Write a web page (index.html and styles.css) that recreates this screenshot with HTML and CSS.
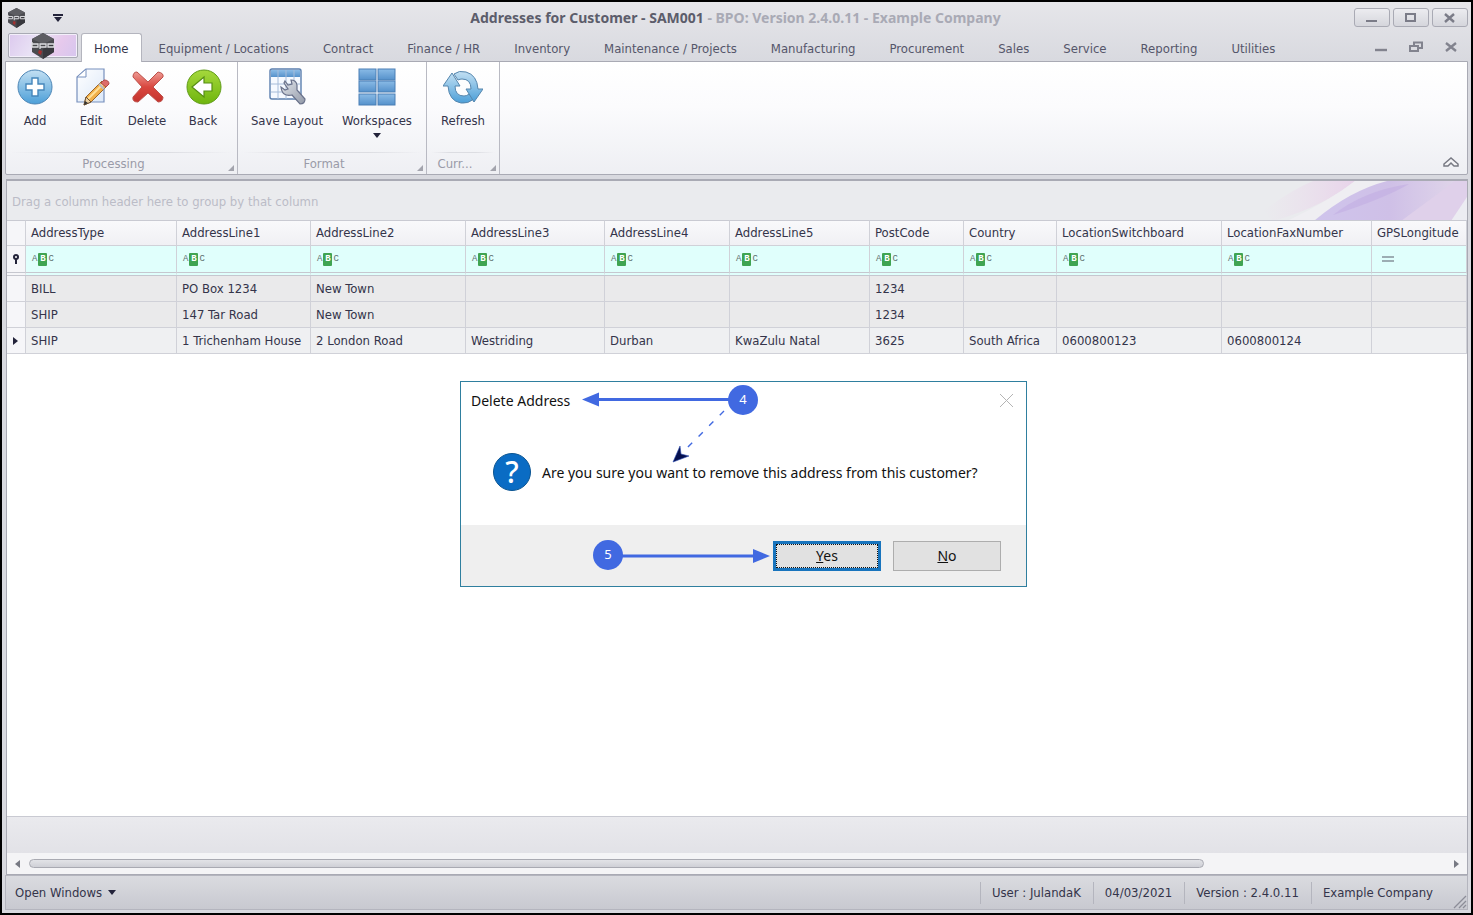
FILE: index.html
```
<!DOCTYPE html>
<html lang="en">

<head>
    <meta charset="utf-8">
    <title>Addresses for Customer - SAM001</title>
    <link rel="stylesheet" href="styles.css">
</head>

<body>
    <svg class="defs" width="0" height="0">
        <defs>
            <linearGradient id="blue" x1="0" y1="0" x2="0" y2="1">
                <stop offset="0" stop-color="#c3e0f3" />
                <stop offset="1" stop-color="#4c9fd8" />
            </linearGradient>
            <linearGradient id="tile" x1="0" y1="0" x2="0" y2="1">
                <stop offset="0" stop-color="#8abbe6" />
                <stop offset="1" stop-color="#5591cb" />
            </linearGradient>
            <linearGradient id="green" x1="0" y1="0" x2="0" y2="1">
                <stop offset="0" stop-color="#a5d83c" />
                <stop offset="1" stop-color="#6fb50e" />
            </linearGradient>
            <linearGradient id="red" x1="0" y1="0" x2="0" y2="1">
                <stop offset="0" stop-color="#ee9a93" />
                <stop offset="0.5" stop-color="#d9473f" />
                <stop offset="1" stop-color="#c4332e" />
            </linearGradient>
            <linearGradient id="paper" x1="0" y1="0" x2="1" y2="1">
                <stop offset="0" stop-color="#ffffff" />
                <stop offset="1" stop-color="#dce8f8" />
            </linearGradient>
            <linearGradient id="steel" x1="0" y1="0" x2="1" y2="1">
                <stop offset="0" stop-color="#e2e6ec" />
                <stop offset="1" stop-color="#9299a8" />
            </linearGradient>
            <symbol id="cube" viewBox="0 0 24 26">
                <path d="M12 0 L23 6 V19 L12 26 L1 19 V6 Z" fill="#4a4a4f" />
                <path d="M12 0 L23 6 L12 11 L1 6 Z" fill="#5d5d62" />
                <path d="M12 16 L23 10 V19 L12 26 Z" fill="#38383d" />
                <path d="M1 9 V14 H7 V11 H1 M9 16 V11 H15 V14 H9 M17 11 H23 V14 H17 Z" fill="none" stroke="#dedee2" stroke-width="1.3" />
                <path d="M8 17 L11 18 L10 22 L7 20 Z" fill="#a32f2f" />
            </symbol>
        </defs>
    </svg>

    <div class="window">
        <header class="titlebar">
            <div class="quick">
                <svg width="19" height="20"><use href="#cube" /></svg>
                <svg width="10" height="8"><path d="M0 1 H10" stroke="#23233a" stroke-width="2" /><path d="M1 3 H9 L5 8 Z" fill="#23233a" /></svg>
            </div>
            <h1 class="title">Addresses for Customer - SAM001 <span>- BPO: Version 2.4.0.11 - Example Company</span></h1>
            <div class="winbuttons">
                <button type="button" aria-label="Minimize"><svg width="12" height="10"><path d="M0 8 H11" stroke="#7b7c88" stroke-width="2" /></svg></button>
                <button type="button" aria-label="Maximize"><svg width="12" height="10"><rect x="1" y="1" width="9" height="7" fill="none" stroke="#7b7c88" stroke-width="2" /></svg></button>
                <button type="button" aria-label="Close"><svg width="12" height="10"><path d="M1 1 L10 9 M10 1 L1 9" stroke="#7b7c88" stroke-width="2.4" /></svg></button>
            </div>
        </header>

        <nav class="tabs">
            <button type="button" class="appbutton" aria-label="Menu"><svg width="24" height="26"><use href="#cube" /></svg></button>
            <a href="#" class="tab active">Home</a>
            <a href="#" class="tab">Equipment / Locations</a>
            <a href="#" class="tab">Contract</a>
            <a href="#" class="tab">Finance / HR</a>
            <a href="#" class="tab">Inventory</a>
            <a href="#" class="tab">Maintenance / Projects</a>
            <a href="#" class="tab">Manufacturing</a>
            <a href="#" class="tab">Procurement</a>
            <a href="#" class="tab">Sales</a>
            <a href="#" class="tab">Service</a>
            <a href="#" class="tab">Reporting</a>
            <a href="#" class="tab">Utilities</a>
            <div class="mdibuttons">
                <button type="button" aria-label="Minimize page"><svg width="14" height="12"><path d="M1 9 H13" stroke="#82838e" stroke-width="2.4" /></svg></button>
                <button type="button" aria-label="Restore page"><svg width="14" height="12"><path d="M5 4 V1.5 H13 V7 H10" fill="none" stroke="#82838e" stroke-width="2" /><rect x="1" y="5" width="8" height="5" fill="none" stroke="#82838e" stroke-width="2" /></svg></button>
                <button type="button" aria-label="Close page"><svg width="14" height="12"><path d="M2 2 L12 10 M12 2 L2 10" stroke="#82838e" stroke-width="2.4" /></svg></button>
            </div>
        </nav>

        <div class="ribbon">
            <section class="group">
                <div class="items">
                    <button type="button" class="item">
                        <svg width="38" height="38"><circle cx="19" cy="19" r="17" fill="url(#blue)" stroke="#4d85b5" /><path d="M16 10 H22 V16 H28 V22 H22 V28 H16 V22 H10 V16 H16 Z" fill="#fff" stroke="#4586bb" stroke-width="1.4" /></svg>
                        Add
                    </button>
                    <button type="button" class="item">
                        <svg width="38" height="38"><path d="M14 1 H32 V34 H5 V9 Z" fill="url(#paper)" stroke="#7790bd" stroke-width="1.2" /><path d="M14 1 V9 H5 Z" fill="#fff" stroke="#7790bd" /><path d="M12 37 L14 29 L30 13 L35 18 L19 34 Z" fill="#f2b04a" stroke="#98652c" /><path d="M16 31 L31 16" stroke="#ffe09a" stroke-width="2" /><path d="M12 37 L14 29 L19 34 Z" fill="#eed3a4" stroke="#6b5136" /><path d="M12 37 L13 33 L16 35 Z" fill="#333" /><path d="M29 15 L32 12 Q37 12 37 16 L34 19 Z" fill="#dd6c69" stroke="#b04a48" /><path d="M27 16 L32 21" stroke="#b9bcc8" stroke-width="2" /></svg>
                        Edit
                    </button>
                    <button type="button" class="item">
                        <svg width="38" height="38"><path d="M9 4 L20 14 L30 4 Q36 5 35 9 L25 19 L35 29 Q35 34 30 34 L20 25 L10 34 Q4 34 5 29 L14 19 L5 9 Q5 4 9 4 Z" fill="url(#red)" stroke="#bd504a" /></svg>
                        Delete
                    </button>
                    <button type="button" class="item">
                        <svg width="38" height="38"><circle cx="20" cy="19" r="17" fill="url(#green)" stroke="#609c18" /><path d="M8 19 L20 9 V15 H28 V23 H20 V29 Z" fill="#fff" stroke="#568e14" stroke-width="1.2" /></svg>
                        Back
                    </button>
                </div>
                <div class="caption">Processing</div>
            </section>
            <section class="group">
                <div class="items wide">
                    <button type="button" class="item">
                        <svg width="38" height="38"><rect x="2" y="1" width="31" height="30" rx="2" fill="#f5f9ff" stroke="#5b7fae" stroke-width="1.4" /><rect x="3" y="2" width="29" height="7" fill="url(#tile)" /><path d="M10 2 V31 M18 2 V31 M26 2 V31 M3 16 H32 M3 24 H32" stroke="#a6bcd9" /><path d="M17 13 L20 17 L24 16 L23 12 Q28 12 29 17 V22 L37 31 Q37 36 32 36 L24 27 Q14 29 13 19 L17 22 L20 21 L16 15 Z" fill="url(#steel)" stroke="#69718a" stroke-width="1.2" /></svg>
                        Save Layout
                    </button>
                    <button type="button" class="item">
                        <svg width="38" height="38"><g fill="url(#tile)" stroke="#4a7eb5"><rect x="1" y="1" width="17" height="11" /><rect x="20" y="1" width="17" height="11" /><rect x="1" y="13" width="17" height="11" /><rect x="20" y="13" width="17" height="11" /><rect x="1" y="26" width="17" height="11" /><rect x="20" y="26" width="17" height="11" /></g></svg>
                        Workspaces
                        <svg class="drop" width="8" height="5"><path d="M0 0 H8 L4 5 Z" fill="#23233a" /></svg>
                    </button>
                </div>
                <div class="caption">Format</div>
            </section>
            <section class="group">
                <div class="items wide">
                    <button type="button" class="item small">
                        <svg width="40" height="38"><path d="M9 5 L17 18 H12 Q12 28 21 28 Q24 28 26 26 L31 31 Q25 36 18 35 Q6 33 5 18 H0 Z" fill="url(#blue)" stroke="#5686ad" /><path d="M31 34 L23 21 H28 Q28 11 19 11 Q17 11 15 12 L11 6 Q16 2 23 4 Q34 7 35 21 H40 Z" fill="url(#blue)" stroke="#5686ad" /></svg>
                        Refresh
                    </button>
                </div>
                <div class="caption">Curr...</div>
            </section>
            <button type="button" class="collapse" aria-label="Collapse ribbon"><svg width="16" height="12"><path d="M1 8 L8 2 L15 8 V10 H11 L8 7 L5 10 H1 Z" fill="#f4f4f6" stroke="#777983" stroke-width="1.5" /></svg></button>
        </div>

        <main class="grid">
            <div class="grouppanel">
                Drag a column header here to group by that column
                <svg class="swirl" width="204" height="40" viewBox="0 0 204 40">
                    <defs>
                        <linearGradient id="pink" x1="0" y1="0" x2="1" y2="0">
                            <stop offset="0" stop-color="#ecdcec" stop-opacity="0" />
                            <stop offset="1" stop-color="#e8d3ea" />
                        </linearGradient>
                        <linearGradient id="lilac" x1="0" y1="0" x2="1" y2="0">
                            <stop offset="0" stop-color="#cfc4ec" />
                            <stop offset="0.5" stop-color="#cfc0e7" />
                            <stop offset="1" stop-color="#e2d8ea" />
                        </linearGradient>
                    </defs>
                    <path d="M0 30 Q30 8 50 0 H92 Q60 26 10 40 Z" fill="url(#pink)" />
                    <path d="M50 40 Q90 10 134 0 H92 Q66 20 24 40 Z" fill="#efeef2" />
                    <path d="M51 40 Q86 10 124 0 H204 V18 L190 40 Z" fill="url(#lilac)" />
                    <path d="M70 34 Q100 10 146 3 Q120 18 70 34" fill="#bfa9e2" opacity="0.5" />
                    <path d="M138 40 L192 0 H204 V18 L188 40 Z" fill="#dfd0ea" />
                    <path d="M188 40 L204 16 V40 Z" fill="#ececf2" />
                </svg>
            </div>
            <table class="addresses">
                <colgroup>
                    <col class="c-mark"><col class="c-type"><col class="c-line1"><col class="c-line2"><col class="c-line3"><col class="c-line4"><col class="c-line5"><col class="c-post"><col class="c-country"><col class="c-switch"><col class="c-fax"><col>
                </colgroup>
                <thead>
                    <tr>
                        <td></td>
                        <th>AddressType</th>
                        <th>AddressLine1</th>
                        <th>AddressLine2</th>
                        <th>AddressLine3</th>
                        <th>AddressLine4</th>
                        <th>AddressLine5</th>
                        <th>PostCode</th>
                        <th>Country</th>
                        <th>LocationSwitchboard</th>
                        <th>LocationFaxNumber</th>
                        <th>GPSLongitude</th>
                    </tr>
                    <tr class="filter">
                        <td><svg width="8" height="10"><circle cx="4" cy="3" r="3" fill="#23233a" /><circle cx="4" cy="3" r="1" fill="#fff" /><path d="M4 5 V10" stroke="#23233a" stroke-width="2" /></svg></td>
                        <td><span class="abc">A<b>B</b>C</span></td>
                        <td><span class="abc">A<b>B</b>C</span></td>
                        <td><span class="abc">A<b>B</b>C</span></td>
                        <td><span class="abc">A<b>B</b>C</span></td>
                        <td><span class="abc">A<b>B</b>C</span></td>
                        <td><span class="abc">A<b>B</b>C</span></td>
                        <td><span class="abc">A<b>B</b>C</span></td>
                        <td><span class="abc">A<b>B</b>C</span></td>
                        <td><span class="abc">A<b>B</b>C</span></td>
                        <td><span class="abc">A<b>B</b>C</span></td>
                        <td><svg class="equals" width="12" height="6"><path d="M0 1 H12 M0 5 H12" stroke="#85929a" stroke-width="1.5" /></svg></td>
                    </tr>
                </thead>
                <tbody>
                    <tr>
                        <td></td><td>BILL</td><td>PO Box 1234</td><td>New Town</td><td></td><td></td><td></td><td>1234</td><td></td><td></td><td></td><td></td>
                    </tr>
                    <tr>
                        <td></td><td>SHIP</td><td>147 Tar Road</td><td>New Town</td><td></td><td></td><td></td><td>1234</td><td></td><td></td><td></td><td></td>
                    </tr>
                    <tr class="current">
                        <td><svg width="5" height="8"><path d="M0 0 L5 4 L0 8 Z" fill="#23233a" /></svg></td><td>SHIP</td><td>1 Trichenham House</td><td>2 London Road</td><td>Westriding</td><td>Durban</td><td>KwaZulu Natal</td><td>3625</td><td>South Africa</td><td>0600800123</td><td>0600800124</td><td></td>
                    </tr>
                </tbody>
            </table>
            <div class="footer"></div>
            <div class="scrollbar">
                <svg width="5" height="8"><path d="M5 0 L0 4 L5 8 Z" fill="#777983" /></svg>
                <div class="track"><div class="thumb"></div></div>
                <svg width="5" height="8"><path d="M0 0 L5 4 L0 8 Z" fill="#777983" /></svg>
            </div>
        </main>

        <footer class="statusbar">
            <button type="button" class="openwindows">Open Windows <svg width="8" height="5"><path d="M0 0 H8 L4 5 Z" fill="#23233a" /></svg></button>
            <span>User : JulandaK</span>
            <span>04/03/2021</span>
            <span>Version : 2.4.0.11</span>
            <span>Example Company</span>
            <svg class="grip" width="14" height="14"><path d="M1 13 L13 1 M6 13 L13 6 M10 13 L13 10" stroke="#8c8d98" stroke-width="1.3" /></svg>
        </footer>

        <div class="dialog" role="dialog" aria-labelledby="dialog-title">
            <div class="dialog-head">
                <h2 id="dialog-title">Delete Address</h2>
                <button type="button" class="dialog-close" aria-label="Close"><svg width="13" height="13"><path d="M0 0 L13 13 M13 0 L0 13" stroke="#b4b4b4" /></svg></button>
            </div>
            <div class="dialog-body">
                <div class="question">?</div>
                <p>Are you sure you want to remove this address from this customer?</p>
            </div>
            <div class="dialog-buttons">
                <button type="button" class="default"><u>Y</u>es</button>
                <button type="button"><u>N</u>o</button>
            </div>
            <svg class="arrows" width="565" height="204">
                <path d="M135 17.5 H270 M160 174 H294" stroke="#4169e1" stroke-width="3" />
                <path d="M121 17.5 L138 10.5 V24.5 Z M309 174 L292 167 V181 Z" fill="#4169e1" />
                <path d="M263 29 L222 70" stroke="#4169e1" stroke-width="1.4" stroke-dasharray="6 9" />
                <path d="M212 80 L219 64 L220 72 L228 74 Z" fill="#06104e" stroke="#2d4fb5" stroke-width="0.6" />
            </svg>
            <span class="step step4">4</span>
            <span class="step step5">5</span>
        </div>
    </div>
</body>

</html>
```
FILE: styles.css
```
* {
    box-sizing: border-box;
}

body {
    margin: 0;
    font-family: "DejaVu Sans Condensed", Tahoma, "Noto Sans", sans-serif;
    font-size: 13px;
    color: #34344a;
}

button {
    font: inherit;
    color: inherit;
    border: 0;
    padding: 0;
    background: none;
}

svg {
    display: block;
}

.defs {
    position: absolute;
}

.window {
    position: relative;
    display: flex;
    flex-direction: column;
    height: 100vh;
    min-height: 640px;
    border: 2px solid #000;
    padding: 0 3px 3px;
    background: linear-gradient(#e6e6ea, #d8d9df 60px);
}

/* title bar */
.titlebar {
    display: flex;
    align-items: center;
    height: 31px;
}

.quick {
    display: flex;
    align-items: center;
    gap: 27px;
    width: 112px;
    padding-left: 2px;
}

.title {
    flex: 1;
    margin: 0;
    text-align: center;
    font-family: "Noto Sans", sans-serif;
    font-size: 14px;
    font-weight: bold;
    color: #5c5d6b;
}

.title span {
    color: #a9aab5;
}

.winbuttons {
    display: flex;
    gap: 3px;
}

.winbuttons button {
    display: flex;
    align-items: center;
    justify-content: center;
    width: 36px;
    height: 19px;
    border: 1px solid #a9aab4;
    border-radius: 3px;
    background: linear-gradient(#ececf0, #d5d6dc);
}

/* tabs */
.tabs {
    display: flex;
    align-items: stretch;
    height: 28px;
}

.appbutton {
    display: flex;
    align-items: center;
    justify-content: center;
    width: 70px;
    height: 25px;
    margin: 0 3px;
    border: 1px solid #a9aab4;
    border-radius: 2px;
    box-shadow: inset 0 0 0 1px #f3effa;
    background: linear-gradient(120deg, #dcc9ee, #e9e2f5 40%, #e6c9ec 70%, #d6c6ee);
}

.tab {
    padding: 0 17px;
    line-height: 31px;
    color: #55566a;
    text-decoration: none;
    white-space: nowrap;
}

.tab.active {
    z-index: 1;
    height: 29px;
    padding: 0 12px;
    border: 1px solid #b4b5be;
    border-bottom: 0;
    border-radius: 3px 3px 0 0;
    background: #fff;
    line-height: 29px;
    color: #34344a;
}

.mdibuttons {
    display: flex;
    gap: 21px;
    align-items: center;
    margin-left: auto;
    padding-right: 10px;
}

/* ribbon */
.ribbon {
    display: flex;
    flex: none;
    height: 114px;
    border: 1px solid #a9aab4;
    border-radius: 0 0 2px 2px;
    background: linear-gradient(#fff, #fbfbfd 40%, #eeeff3);
}

.group {
    display: flex;
    flex-direction: column;
    justify-content: space-between;
    position: relative;
    border-right: 1px solid #b9bac3;
}

.items {
    display: flex;
    padding: 6px 0 0 1px;
    margin-right: 6px;
}

.items.wide {
    padding: 6px 4px 0;
    margin: 0;
}

.item {
    display: flex;
    flex-direction: column;
    align-items: center;
    gap: 7px;
    width: 56px;
    line-height: 16px;
    white-space: nowrap;
}

.wide .item {
    width: 90px;
}

.wide .item.small {
    width: 64px;
}

.item .drop {
    margin-top: -3px;
}

.caption {
    padding-right: 16px;
    margin: 0 4px;
    height: 22px;
    line-height: 23px;
    text-align: center;
    color: #9a9ba8;
    background: linear-gradient(90deg, transparent, #dcdde2 30%, #dcdde2 70%, transparent) top / 100% 1px no-repeat;
}

/* launcher corner of a group */
.group::after {
    content: "";
    position: absolute;
    right: 3px;
    bottom: 3px;
    border: 3px solid;
    border-color: transparent #a3a4ad #a3a4ad transparent;
}

.collapse {
    align-self: flex-end;
    margin: 0 8px 6px auto;
}

/* grid */
.grid {
    display: flex;
    flex-direction: column;
    flex: 1;
    min-height: 0;
    margin: 4px 0 0 1px;
    border: 1px solid #a9aab4;
    border-top: 2px solid #a9aab4;
    background: #fff;
}

.grouppanel {
    position: relative;
    flex: none;
    height: 39px;
    padding-left: 5px;
    line-height: 41px;
    color: #bbbcc7;
    background: #eaebee;
    overflow: hidden;
}

.swirl {
    position: absolute;
    top: 0;
    right: 0;
}

.addresses {
    width: 100%;
    table-layout: fixed;
    border-collapse: separate;
    border-spacing: 0;
}

.addresses th,
.addresses td {
    height: 26px;
    padding: 0 0 0 5px;
    border-right: 1px solid #d0d1d8;
    border-bottom: 1px solid #d0d1d8;
    text-align: left;
    font-weight: normal;
    white-space: nowrap;
    overflow: hidden;
}

.addresses thead tr:first-child > * {
    padding-bottom: 2px;
    border-top: 1px solid #c9cad2;
    background: linear-gradient(#f9f9fb, #f0f0f4);
}

.addresses tbody td {
    background: #eaeaeb;
}

.addresses .current td {
    background: #eff0f2;
}

.addresses tr td:first-child {
    padding-left: 6px;
    background: #f6f6f9;
}

.addresses .filter td {
    height: 30px;
    border-bottom: 4px double #c6c7cf;
    background: #e0fffc;
}

.addresses .filter td:first-child {
    padding-left: 5px;
    background: #f6f6f9;
}

.c-mark { width: 19px; }
.c-type { width: 151px; }
.c-line1 { width: 134px; }
.c-line2 { width: 155px; }
.c-line3 { width: 139px; }
.c-line4 { width: 125px; }
.c-line5 { width: 140px; }
.c-post { width: 94px; }
.c-country { width: 93px; }
.c-switch { width: 165px; }
.c-fax { width: 150px; }

.abc {
    display: flex;
    align-items: center;
    gap: 1px;
    padding-left: 1px;
    font-family: "Liberation Mono", monospace;
    font-size: 9px;
    color: #5f6f70;
}

.abc b {
    width: 9px;
    line-height: 13px;
    text-align: center;
    border-radius: 1px;
    background: #3fa452;
    color: #fff;
}

.equals {
    margin-left: 5px;
}

.footer {
    height: 37px;
    margin-top: auto;
    border-top: 1px solid #c9cad2;
    background: linear-gradient(#eaeaee, #e2e2e7);
}

.scrollbar {
    display: flex;
    align-items: center;
    gap: 9px;
    height: 21px;
    padding: 0 8px;
    background: #f4f4f6;
}

.track {
    flex: 1;
}

.thumb {
    width: 83%;
    height: 9px;
    border: 1px solid #a9aab2;
    border-radius: 5px;
    background: linear-gradient(#e2e3e7, #cfd0d6);
}

/* status bar */
.statusbar {
    display: flex;
    align-items: center;
    flex: none;
    height: 35px;
    border: 1px solid #b4b5be;
    background: linear-gradient(#dadbe0, #c8c9d0);
}

.openwindows {
    display: flex;
    align-items: center;
    gap: 6px;
    margin-right: auto;
    padding-left: 9px;
}

.statusbar span {
    padding: 0 12px 0 11px;
    line-height: 22px;
    border-left: 1px solid #b4b5be;
}

.grip {
    align-self: flex-end;
    margin-left: 8px;
}

/* message box */
.dialog {
    position: absolute;
    left: 458px;
    top: 379px;
    width: 567px;
    border: 1px solid #2f7f9f;
    background: #fff;
    color: #111;
    font-family: "Segoe UI", "Noto Sans", sans-serif;
    font-size: 14px;
}

.dialog-head {
    display: flex;
    align-items: center;
    justify-content: space-between;
    height: 37px;
    padding: 0 13px 0 10px;
}

.dialog-head h2 {
    margin: 0;
    font-size: 14px;
    font-weight: normal;
}

.dialog-body {
    display: flex;
    align-items: center;
    gap: 11px;
    height: 106px;
    padding-left: 32px;
}

.dialog-body p {
    margin: 0;
    white-space: nowrap;
}

.question {
    width: 38px;
    height: 38px;
    border: 1px solid #0b5592;
    border-radius: 50%;
    background: #0a6cc4;
    color: #fff;
    font-size: 30px;
    font-weight: 500;
    line-height: 35px;
    text-align: center;
}

.dialog-buttons {
    display: flex;
    justify-content: flex-end;
    gap: 12px;
    padding: 16px 25px 15px;
    background: #efefef;
}

.dialog-buttons button {
    width: 108px;
    height: 30px;
    padding-bottom: 2px;
    border: 1px solid #adadad;
    background: #e1e1e1;
}

.dialog-buttons .default {
    border: 3px solid #1874bd;
    outline: 1px dotted #111;
    outline-offset: -4px;
}

/* callouts over the message box */
.arrows {
    position: absolute;
    left: 0;
    top: 0;
}

.step {
    position: absolute;
    width: 30px;
    height: 30px;
    border-radius: 50%;
    background: #4169e1;
    color: #fff;
    font-size: 13px;
    line-height: 29px;
    text-align: center;
}

.step4 {
    left: 267px;
    top: 3px;
}

.step5 {
    left: 132px;
    top: 158px;
}
```
